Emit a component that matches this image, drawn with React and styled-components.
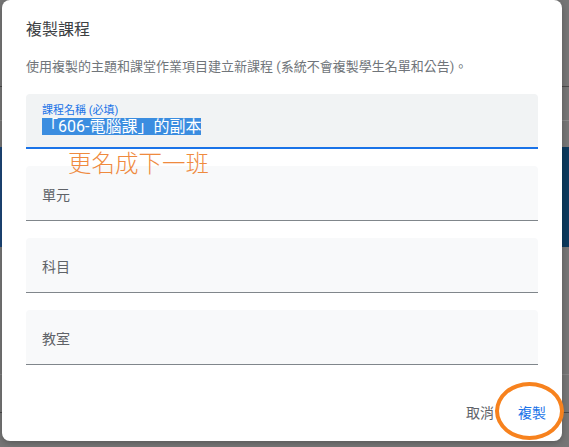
import React from 'react'
import styled, { createGlobalStyle } from 'styled-components'

const GlobalStyle = createGlobalStyle`
    html, body {
        margin: 0;
        padding: 0;
        background: #767676;
    }
    body {
        font-family: Roboto, "Noto Sans CJK TC", "Noto Sans", sans-serif;
    }
`

const fields = ['單元', '科目', '教室']

const App = () => {
    return (
        <Screen>
            <GlobalStyle />
            <Backdrop>
                <BackRow $h={57} />
                <BackRow $h={28} $line="#4a4a4a" />
                <BackRow $h={33} $line="#8a8a8a" />
                <BackRow $h={25} />
                <BlueBand />
                <BackRow $h={127} $line="#858585" />
                <BackRow $h={37} $line="#4a4a4a" />
            </Backdrop>

            <Dialog>
                <Title>複製課程</Title>
                <Description>
                    使用複製的主題和課堂作業項目建立新課程 (系統不會複製學生名單和公告)。
                </Description>

                <Fields>
                    <Field $active>
                        <FloatLabel>課程名稱 (必填)</FloatLabel>
                        <Selected>「606-電腦課」的副本</Selected>
                    </Field>
                    {fields.map((name) => (
                        <Field key={name}>
                            <Placeholder>{name}</Placeholder>
                        </Field>
                    ))}
                </Fields>

                <Actions>
                    <TextButton>取消</TextButton>
                    <TextButton $primary>複製</TextButton>
                </Actions>

                <Note>更名成下一班</Note>
                <Circle />
            </Dialog>
        </Screen>
    )
}

export default App

const Screen = styled.div`
    position: relative;
    width: 569px;
    height: 447px;
    overflow: hidden;
    background: #767676;
`

const Backdrop = styled.div`
    display: flex;
    flex-direction: column;
    width: 100%;
`

const BackRow = styled.div`
    height: ${(p) => p.$h}px;
    border-bottom: 1px solid ${(p) => p.$line || 'transparent'};
`

const BlueBand = styled.div`
    height: 100px;
    background: linear-gradient(90deg, #1d4678 0%, #1d4678 50%, #0c3a5d 50%, #0c3a5d 100%);
`

const Dialog = styled.div`
    position: absolute;
    left: 2px;
    top: 0;
    width: 560px;
    height: 441px;
    box-sizing: border-box;
    background: #fff;
    border-radius: 8px;
    padding: 20px 24px 0 24px;
    display: flex;
    flex-direction: column;
    box-shadow: 0 2px 6px rgba(0, 0, 0, 0.25);
`

const Title = styled.div`
    font-size: 16px;
    line-height: 20px;
    color: #3c4043;
`

const Description = styled.div`
    margin-top: 18px;
    font-size: 13px;
    line-height: 18px;
    color: #70757a;
    white-space: nowrap;
`

const Fields = styled.div`
    margin-top: 18px;
    display: flex;
    flex-direction: column;
    gap: 17px;
    width: 512px;
`

const Field = styled.div`
    height: 55px;
    box-sizing: border-box;
    border-radius: 4px 4px 0 0;
    background: ${(p) => (p.$active ? '#f1f3f4' : '#f8f9fa')};
    border-bottom: ${(p) => (p.$active ? '2px solid #1a73e8' : '1px solid #80868b')};
    padding: ${(p) => (p.$active ? '10px 16px 0' : '0 16px')};
    display: flex;
    flex-direction: column;
    justify-content: ${(p) => (p.$active ? 'flex-start' : 'center')};
`

const FloatLabel = styled.div`
    font-size: 11px;
    line-height: 14px;
    color: #1a73e8;
`

const Selected = styled.span`
    align-self: flex-start;
    font-size: 16px;
    line-height: 17px;
    color: #fff;
    background: #3b8de0;
`

const Placeholder = styled.div`
    font-size: 14px;
    color: #5f6368;
    margin-top: 2px;
`

const Actions = styled.div`
    display: flex;
    justify-content: flex-end;
    gap: 24px;
    padding: 38px 16px 0 0;
    margin-right: -24px;
`

const TextButton = styled.span`
    font-size: 14px;
    line-height: 20px;
    color: ${(p) => (p.$primary ? '#1a73e8' : '#5f6368')};
`

const Note = styled.div`
    position: absolute;
    left: 66px;
    top: 151px;
    font-family: "Noto Sans CJK TC", sans-serif;
    font-weight: 300;
    font-size: 23.5px;
    line-height: 23px;
    color: #ef8a3e;
`

const Circle = styled.div`
    position: absolute;
    left: 493px;
    top: 382px;
    width: 61px;
    height: 50px;
    border: 4px solid #f7821e;
    border-radius: 50%;
`
